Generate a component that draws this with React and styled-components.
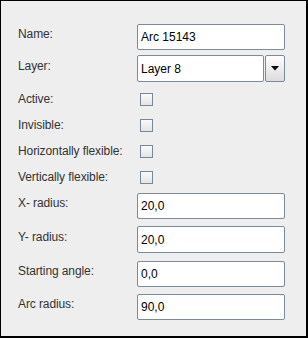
import React from "react";
import styled, { createGlobalStyle } from "styled-components";

const Global = createGlobalStyle`
  html, body { margin: 0; padding: 0; background: #eeeeee; }
  * { box-sizing: border-box; }
`;

const Panel = styled.div`
  width: 308px;
  height: 338px;
  background: #eeeeee;
  border-style: solid;
  border-color: #000;
  border-width: 1px 2px 2px 1px;
  padding: 23px 0 0 17px;
  display: flex;
  flex-direction: column;
  font-family: "Liberation Sans", Arial, sans-serif;
  font-size: 12px;
`;

const Row = styled.div`
  display: grid;
  grid-template-columns: 119px 148px;
  align-items: center;
  height: ${(p) => p.$h}px;
  margin-top: ${(p) => p.$gap || 0}px;
`;

const Label = styled.span`
  color: #333333;
  padding-bottom: ${(p) => (p.$raised ? 6 : 0)}px;
  white-space: nowrap;
  letter-spacing: -0.1px;
`;

const Field = styled.div`
  height: 100%;
  width: ${(p) => p.$w || 148}px;
  background: #fff;
  border: 1px solid #7b8b9c;
  border-radius: 2px;
  display: flex;
  align-items: center;
  padding-left: 3px;
  color: #000;
  font-size: 12px;
`;

const Combo = styled.div`
  display: flex;
  height: 100%;
  gap: 1px;
`;

const ArrowButton = styled.div`
  width: 20px;
  height: 100%;
  border: 1px solid #7b8b9c;
  border-radius: 2px;
  background: linear-gradient(#ffffff, #dcdcdc);
  display: flex;
  align-items: center;
  justify-content: center;
`;

const Check = styled.div`
  width: 13px;
  height: 13px;
  margin-left: 3px;
  border: 1px solid #76889a;
  background: linear-gradient(#fafafa, #e4e4e4);
`;

export default function App() {
  return (
    <>
      <Global />
      <Panel>
        <Row $h={26}>
          <Label $raised>Name:</Label>
          <Field>Arc 15143</Field>
        </Row>
        <Row $h={27} $gap={5}>
          <Label $raised>Layer:</Label>
          <Combo>
            <Field $w={128}>Layer 8</Field>
            <ArrowButton>
              <svg width="8" height="5" viewBox="0 0 8 5">
                <polygon points="0,0 8,0 4,4.5" fill="#000" />
              </svg>
            </ArrowButton>
          </Combo>
        </Row>
        <Row $h={26} $gap={4}>
          <Label>Active:</Label>
          <Check />
        </Row>
        <Row $h={26}>
          <Label>Invisible:</Label>
          <Check />
        </Row>
        <Row $h={26}>
          <Label>Horizontally flexible:</Label>
          <Check />
        </Row>
        <Row $h={26}>
          <Label>Vertically flexible:</Label>
          <Check />
        </Row>
        <Row $h={26} $gap={3}>
          <Label $raised>X- radius:</Label>
          <Field>20,0</Field>
        </Row>
        <Row $h={27} $gap={7}>
          <Label $raised>Y- radius:</Label>
          <Field>20,0</Field>
        </Row>
        <Row $h={26} $gap={8}>
          <Label $raised>Starting angle:</Label>
          <Field>0,0</Field>
        </Row>
        <Row $h={26} $gap={7}>
          <Label $raised>Arc radius:</Label>
          <Field>90,0</Field>
        </Row>
      </Panel>
    </>
  );
}
